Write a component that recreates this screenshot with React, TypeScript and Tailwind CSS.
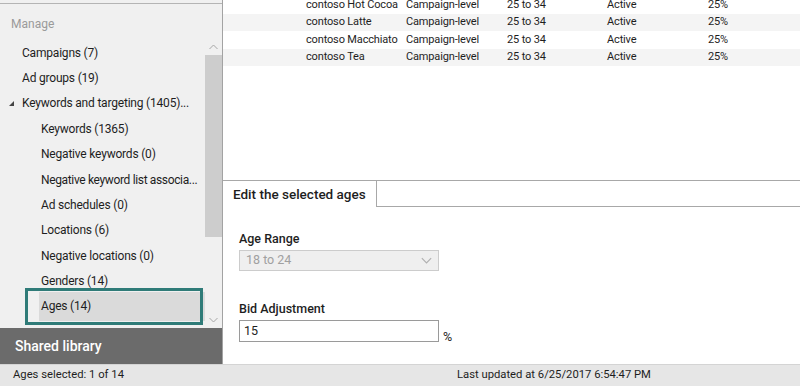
import React from "react";

const navItems = [
  { label: "Campaigns (7)", indent: 1 },
  { label: "Ad groups (19)", indent: 1 },
  { label: "Keywords and targeting (1405)...", indent: 1, expanded: true },
  { label: "Keywords (1365)", indent: 2 },
  { label: "Negative keywords (0)", indent: 2 },
  { label: "Negative keyword list associa...", indent: 2, tight: true },
  { label: "Ad schedules (0)", indent: 2 },
  { label: "Locations (6)", indent: 2 },
  { label: "Negative locations (0)", indent: 2 },
  { label: "Genders (14)", indent: 2 },
  { label: "Ages (14)", indent: 2, selected: true },
];

const rows = [
  "contoso Hot Cocoa",
  "contoso Latte",
  "contoso Macchiato",
  "contoso Tea",
];

function ChevronUp() {
  return (
    <svg width="9" height="6" viewBox="0 0 9 6" fill="none">
      <path d="M0.5 5L4.5 1L8.5 5" stroke="#a6a6a6" strokeWidth="1" />
    </svg>
  );
}

function ChevronDown({ color = "#a6a6a6", w = 9, h = 6 }: { color?: string; w?: number; h?: number }) {
  return (
    <svg width={w} height={h} viewBox="0 0 9 6" fill="none">
      <path d="M0.5 1L4.5 5L8.5 1" stroke={color} strokeWidth="1" />
    </svg>
  );
}

export default function App() {
  return (
    <div
      className="w-[800px] h-[386px] flex flex-col overflow-hidden bg-white text-[#1e1e1e]"
      style={{ fontFamily: 'Roboto, "Noto Sans", sans-serif' }}
    >
      <div className="flex h-[364px]">
        {/* left navigation */}
        <div className="w-[223px] shrink-0 flex flex-col bg-[#f0f0f0] border-r border-[#a3a3a3]">
          <div className="h-[4px] border-b border-[#b4b4b4]" />
          <div className="h-[36px] pl-[11px] pt-[3px] flex items-center text-[12px] text-[#9a9a9a]">
            Manage
          </div>
          <div className="relative flex-1 flex">
            <div className="flex-1 min-w-0 overflow-hidden flex flex-col">
              {navItems.map((item) => (
                <div
                  key={item.label}
                  className={`flex items-center text-[12px] whitespace-nowrap ${
                    item.tight ? "tracking-[-0.35px]" : "tracking-[-0.2px]"
                  } ${item.indent === 1 ? "pl-[22px]" : "pl-[41px]"} ${
                    item.selected ? "bg-[#dadada] ml-[39px] !pl-[2px] h-[29px] mt-[-2px]" : "h-[25.4px]"
                  }`}
                >
                  {item.expanded && (
                    <span className="absolute left-[9px] flex">
                      <svg width="5" height="5" viewBox="0 0 5 5">
                        <path d="M5 0L5 5L0 5Z" fill="#444" />
                      </svg>
                    </span>
                  )}
                  {item.label}
                </div>
              ))}
            </div>
            {/* scrollbar */}
            <div className="w-[17px] shrink-0 flex flex-col items-center">
              <div className="h-[13px] flex items-center justify-center">
                <ChevronUp />
              </div>
              <div className="mt-[2px] w-full h-[182px] bg-[#cdcdcd]" />
              <div className="flex-1" />
              <div className="h-[17px] flex items-center justify-center">
                <ChevronDown />
              </div>
            </div>
            <div className="absolute left-[25px] top-[248px] w-[178px] h-[37px] border-[3px] border-[#2f7b78]" />
          </div>
          <div className="h-[36px] shrink-0 bg-[#6b6b6b] pl-[15px] flex items-center text-[14px] font-medium text-white">
            Shared library
          </div>
        </div>

        {/* right content */}
        <div className="flex-1 flex flex-col bg-white">
          <div className="h-[181px] border-b border-[#a8a8a8] overflow-hidden">
            <div className="mt-[-4px]">
              {rows.map((name, i) => (
                <div
                  key={name}
                  className={`h-[17.5px] flex items-center text-[11px] tracking-[-0.15px] whitespace-nowrap ${
                    i % 2 === 1 ? "bg-[#f4f4f4]" : "bg-white"
                  }`}
                >
                  <div className="w-[83px]" />
                  <div className="w-[100px]">{name}</div>
                  <div className="w-[101px]">Campaign-level</div>
                  <div className="w-[100px]">25 to 34</div>
                  <div className="w-[101px]">Active</div>
                  <div>25%</div>
                </div>
              ))}
            </div>
          </div>
          <div className="h-[26px] flex">
            <div className="w-[154px] border-r border-[#a8a8a8] pl-[10px] flex items-center text-[13.5px] font-medium">
              Edit the selected ages
            </div>
            <div className="flex-1 border-b border-[#a8a8a8]" />
          </div>
          <div className="flex-1 pl-[16px] pt-[22px] flex flex-col">
            <div className="text-[12.5px] font-medium h-[20px] flex items-center">Age Range</div>
            <div className="mt-[1px] w-[200px] h-[21px] border border-[#cccccc] bg-[#efefef] flex items-center justify-between px-[6px] text-[12.5px] text-[#a0a0a0]">
              <span>18 to 24</span>
              <ChevronDown color="#b0b0b0" w={11} h={7} />
            </div>
            <div className="mt-[28px] text-[12.5px] font-medium h-[20px] flex items-center">
              Bid Adjustment
            </div>
            <div className="mt-[1px] flex items-end">
              <div className="w-[200px] h-[22px] border border-[#9a9a9a] bg-white flex items-center px-[4px] text-[12.5px]">
                15
              </div>
              <span className="ml-[4px] text-[12.5px] leading-none mb-[-1px]">%</span>
            </div>
          </div>
        </div>
      </div>

      {/* status bar */}
      <div className="h-[22px] shrink-0 bg-[#e6e6e6] border-t border-[#d4d4d4] flex items-center text-[11.25px]">
        <div className="w-[457px] pl-[13px]">Ages selected: 1 of 14</div>
        <div>Last updated at 6/25/2017 6:54:47 PM</div>
      </div>
    </div>
  );
}
